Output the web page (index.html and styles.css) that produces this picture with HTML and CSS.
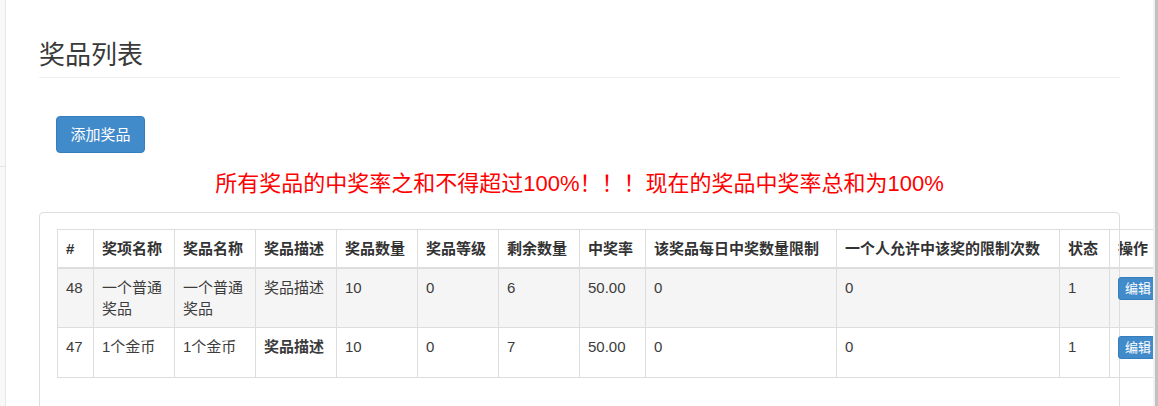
FILE: index.html
```html
<!DOCTYPE html>
<html lang="zh-CN">
<head>
<meta charset="utf-8">
<title>奖品列表</title>
<link rel="stylesheet" href="styles.css">
</head>
<body>
<div class="side-strip"><div class="side-top"></div></div>
<main class="main">
  <h1 class="page-header">奖品列表</h1>
  <div class="toolbar"><button class="btn btn-primary">添加奖品</button></div>
  <p class="notice">所有奖品的中奖率之和不得超过100%！！！现在的奖品中奖率总和为100%</p>
  <div class="panel">
    <div class="panel-body">
      <table class="table">
        <colgroup>
          <col class="c-id"><col class="c-81"><col class="c-81"><col class="c-81"><col class="c-81"><col class="c-81"><col class="c-81"><col class="c-rate"><col class="c-day"><col class="c-person"><col class="c-state"><col class="c-op">
        </colgroup>
        <thead>
          <tr><th>#</th><th>奖项名称</th><th>奖品名称</th><th>奖品描述</th><th>奖品数量</th><th>奖品等级</th><th>剩余数量</th><th>中奖率</th><th>该奖品每日中奖数量限制</th><th>一个人允许中该奖的限制次数</th><th>状态</th><th>操作</th></tr>
        </thead>
        <tbody>
          <tr class="odd"><td>48</td><td>一个普通奖品</td><td>一个普通奖品</td><td>奖品描述</td><td>10</td><td>0</td><td>6</td><td>50.00</td><td>0</td><td>0</td><td>1</td><td><button class="btn-xs">编辑</button></td></tr>
          <tr><td>47</td><td>1个金币</td><td>1个金币</td><td><b>奖品描述</b></td><td>10</td><td>0</td><td>7</td><td>50.00</td><td>0</td><td>0</td><td>1</td><td><button class="btn-xs">编辑</button></td></tr>
        </tbody>
      </table>
    </div>
  </div>
</main>
<div class="scrollbar"><div class="thumb"></div></div>
</body>
</html>
```
FILE: styles.css
```css
html, body {
  margin: 0;
  padding: 0;
  height: 100%;
}
body {
  display: flex;
  font-family: "Liberation Sans", "Noto Sans CJK SC", sans-serif;
  font-size: 15px;
  color: #333;
  background: #fff;
  overflow: hidden;
}
.side-strip {
  width: 5px;
  flex: 0 0 5px;
  background: #f8f8f8;
  border-right: 1px solid #e7e7e7;
}
.side-top {
  height: 166px;
  border-bottom: 1px solid #e7e7e7;
}
.main {
  flex: 1;
  min-width: 0;
  padding: 0 33px;
  overflow: hidden;
}
.page-header {
  margin: 38px 0 0;
  padding-bottom: 10px;
  font-size: 26px;
  line-height: 29px;
  font-weight: 400;
  color: #3a3a3a;
  border-bottom: 1px solid #eee;
  font-family: "Noto Sans CJK SC", sans-serif;
}
.toolbar {
  margin-top: 38px;
  padding-left: 17px;
}
.btn {
  font-family: "Liberation Sans", "Noto Sans CJK SC", sans-serif;
  font-size: 15px;
  line-height: 21px;
  padding: 7px 13.5px;
  border: 1px solid #357ebd;
  border-radius: 4px;
  background: #428bca;
  color: #fff;
  display: inline-block;
}
.notice {
  margin: 16px 0 0;
  text-align: center;
  color: #ff0000;
  font-size: 22px;
  line-height: 30px;
}
.panel {
  position: relative;
  margin-top: 13px;
}
.panel::after {
  content: "";
  position: absolute;
  inset: 0;
  border: 1px solid #ddd;
  border-radius: 4px;
  pointer-events: none;
}
.panel-body {
  padding: 17px 18px 40px;
}
.table {
  border-collapse: collapse;
  table-layout: fixed;
  width: 1107px;
  background: #fff;
  border: 1px solid #ddd;
}
.c-id { width: 36px; }
.c-81 { width: 81px; }
.c-rate { width: 66px; }
.c-day { width: 191px; }
.c-person { width: 223px; }
.c-state { width: 50px; }
.c-op { width: 54px; }
.table th, .table td {
  border: 1px solid #ddd;
  padding: 8px;
  line-height: 21px;
  text-align: left;
  vertical-align: top;
  white-space: normal;
  overflow: visible;
}
.table th {
  font-weight: 700;
  border-bottom: 2px solid #ddd;
  white-space: nowrap;
}
.table td {
  color: #3c3c3c;
}
.table tr.odd td {
  background: #f5f5f5;
}
.btn-xs {
  position: relative;
  z-index: 1;
  display: inline-block;
  vertical-align: top;
  margin-bottom: 10px;
  font-family: "Liberation Sans", "Noto Sans CJK SC", sans-serif;
  font-size: 13px;
  line-height: 19px;
  padding: 1px 6px;
  border: 1px solid #357ebd;
  border-radius: 3px;
  background: #428bca;
  color: #fff;
  white-space: nowrap;
}
.scrollbar {
  flex: 0 0 5px;
  width: 5px;
  background: #f1f1f1;
  display: flex;
  justify-content: flex-end;
}
.thumb {
  width: 3px;
  background: #c1c1c1;
}
```
